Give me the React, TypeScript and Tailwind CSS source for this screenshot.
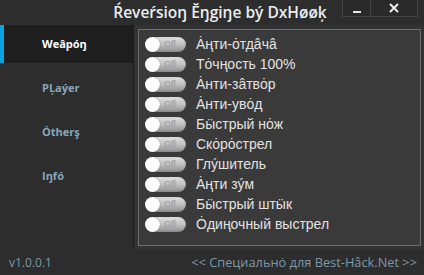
import React from "react";

const items = [
  "Ȧңти-ȯтдâчâ",
  "Тȯчңость 100%",
  "Ȧнти-зâтвȯр",
  "Ȧнти-увȯд",
  "Бӹстрый нȯж",
  "Скȯрȯстрел",
  "Глýшитель",
  "Ȧңти зýм",
  "Бӹстрый штӹк",
  "Ȯдиңочный выстрел",
];

const tabs = ["Weâpóŋ", "PĻaýer", "Ótherş", "Iŋfó"];

function Toggle() {
  return (
    <div className="relative w-[41px] h-[15px] rounded-full bg-gradient-to-b from-[#e2e2e2] via-[#c0c0c0] to-[#909090] shadow-[inset_0_0_1px_rgba(0,0,0,0.5)]">
      <div className="absolute left-0 top-0 w-[15px] h-[15px] rounded-full bg-white shadow-[0_0_1px_rgba(0,0,0,0.6)]" />
      <span
        className="absolute left-[19px] top-0 leading-[15px] text-[9px] text-[#9a9a9a]"
        style={{ fontFamily: "'Liberation Sans', Arial, sans-serif" }}
      >
        Off
      </span>
    </div>
  );
}

export default function App() {
  return (
    <div
      className="w-[424px] h-[275px] bg-[#2d2d2d] flex flex-col overflow-hidden"
      style={{ fontFamily: "'Open Sans', 'Noto Sans', sans-serif" }}
    >
      {/* Title bar */}
      <div className="relative h-[25px] flex items-center justify-center pl-[16px] shrink-0">
        <span className="text-[15.5px] font-semibold text-[#e9eef2] leading-none">
          Ŕeveŕsioŋ Ĕŋgiŋe bý DxHøøķ
        </span>
        <div className="absolute right-[6px] top-0 flex h-[17px] border border-t-0 border-[#444] bg-[#2a2a2a]">
          <div className="w-[28px] h-full flex items-end justify-center pb-[3px] border-r border-[#444]">
            <div className="w-[8px] h-[2px] bg-[#e8e8e8]" />
          </div>
          <div className="w-[46px] h-full flex items-center justify-center">
            <svg width="10" height="10" viewBox="0 0 10 10">
              <path d="M1 1 L9 9 M9 1 L1 9" stroke="#eaeaea" strokeWidth="2" />
            </svg>
          </div>
        </div>
      </div>

      {/* Body */}
      <div className="flex h-[225px] shrink-0">
        <div className="w-[134px] border-r border-[#1c1c1c] flex flex-col gap-[6px]">
          {tabs.map((t, i) => (
            <div
              key={t}
              className={
                "relative h-[38px] flex items-center pl-[42px] text-[11px] font-bold " +
                (i === 0 ? "bg-[#1e1e1e] text-white" : "text-[#8aa6bb]")
              }
            >
              {i === 0 && <div className="absolute left-0 top-0 bottom-0 w-[4px] bg-[#0aa2e0]" />}
              {t}
            </div>
          ))}
        </div>
        <div className="flex-1 bg-[#333333] pl-[4px] pr-[3px] pt-[4px] pb-[4px] flex">
          <div className="flex-1 border border-[#6e6e6e] bg-[#3a3a3a] pl-[6px] pt-[4px] flex flex-col">
            {items.map((it) => (
              <div key={it} className="h-[20px] flex items-center gap-[10px]">
                <Toggle />
                <span
                  className="text-[14px] text-[#e2e2e2] leading-none"
                  style={{ fontFamily: "'Liberation Sans', Arial, sans-serif" }}
                >
                  {it}
                </span>
              </div>
            ))}
          </div>
        </div>
      </div>

      {/* Footer */}
      <div className="flex-1 flex items-center justify-between pl-[9px] pr-[7px] text-[12px] text-[#7d98a8]">
        <span>v1.0.0.1</span>
        <span className="text-[12.8px]">&lt;&lt; Специальнȯ для Best-Hâck.Net &gt;&gt;</span>
      </div>
    </div>
  );
}
